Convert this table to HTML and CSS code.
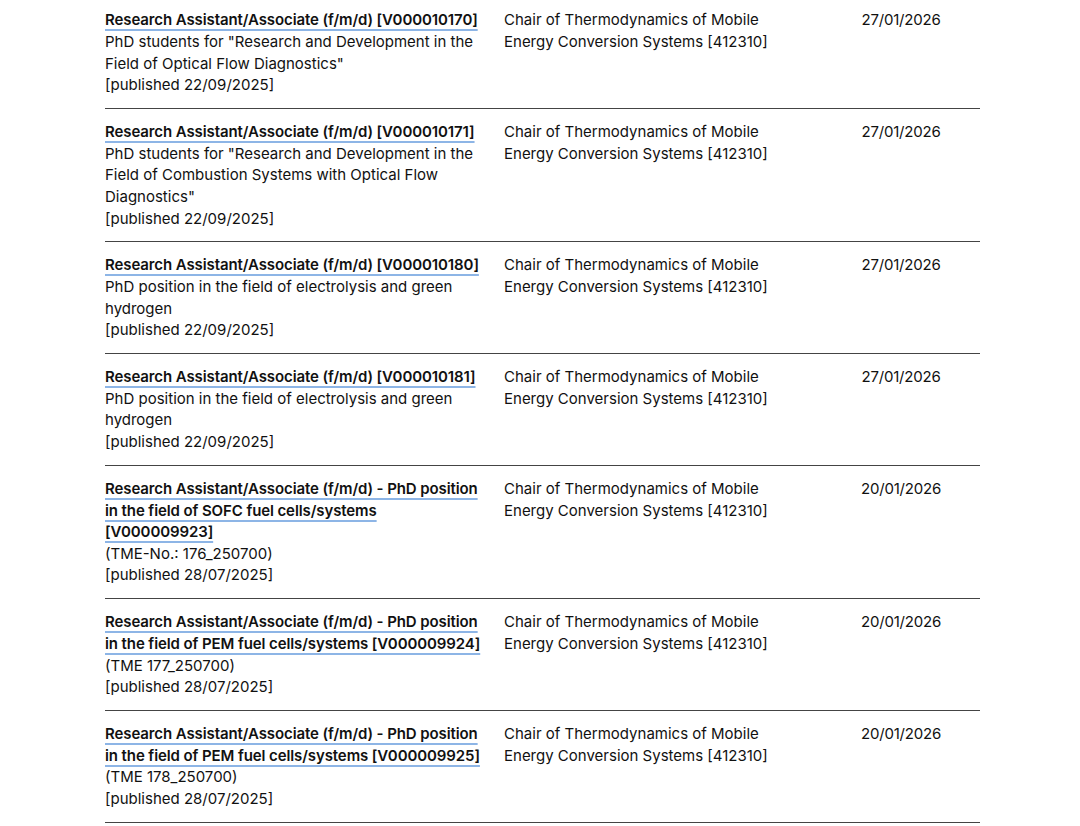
FILE: index.html
```html
<!DOCTYPE html>
<html lang="en">
<head>
<meta charset="utf-8">
<title>Job listings</title>
<link rel="stylesheet" href="styles.css">
</head>
<body>
<div class="jobs">
  <div class="row">
    <div class="cell title-cell">
      <a class="title" href="#">Research Assistant/Associate (f/m/d) [V000010170]</a><br>
      PhD students for "Research and Development in the Field of Optical Flow Diagnostics"<br>
      [published 22/09/2025]
    </div>
    <div class="cell org">Chair of Thermodynamics of Mobile Energy Conversion Systems [412310]</div>
    <div class="cell date">27/01/2026</div>
  </div>
  <div class="row">
    <div class="cell title-cell">
      <a class="title" href="#">Research Assistant/Associate (f/m/d) [V000010171]</a><br>
      PhD students for "Research and Development in the Field of Combustion Systems with Optical Flow Diagnostics"<br>
      [published 22/09/2025]
    </div>
    <div class="cell org">Chair of Thermodynamics of Mobile Energy Conversion Systems [412310]</div>
    <div class="cell date">27/01/2026</div>
  </div>
  <div class="row">
    <div class="cell title-cell">
      <a class="title" href="#">Research Assistant/Associate (f/m/d) [V000010180]</a><br>
      PhD position in the field of electrolysis and green hydrogen<br>
      [published 22/09/2025]
    </div>
    <div class="cell org">Chair of Thermodynamics of Mobile Energy Conversion Systems [412310]</div>
    <div class="cell date">27/01/2026</div>
  </div>
  <div class="row">
    <div class="cell title-cell">
      <a class="title" href="#">Research Assistant/Associate (f/m/d) [V000010181]</a><br>
      PhD position in the field of electrolysis and green hydrogen<br>
      [published 22/09/2025]
    </div>
    <div class="cell org">Chair of Thermodynamics of Mobile Energy Conversion Systems [412310]</div>
    <div class="cell date">27/01/2026</div>
  </div>
  <div class="row">
    <div class="cell title-cell">
      <a class="title" href="#">Research Assistant/Associate (f/m/d) - PhD position in the field of SOFC fuel cells/systems [V000009923]</a><br>
      (TME-No.: 176_250700)<br>
      [published 28/07/2025]
    </div>
    <div class="cell org">Chair of Thermodynamics of Mobile Energy Conversion Systems [412310]</div>
    <div class="cell date">20/01/2026</div>
  </div>
  <div class="row">
    <div class="cell title-cell">
      <a class="title" href="#">Research Assistant/Associate (f/m/d) - PhD position in the field of PEM fuel cells/systems [V000009924]</a><br>
      (TME 177_250700)<br>
      [published 28/07/2025]
    </div>
    <div class="cell org">Chair of Thermodynamics of Mobile Energy Conversion Systems [412310]</div>
    <div class="cell date">20/01/2026</div>
  </div>
  <div class="row">
    <div class="cell title-cell">
      <a class="title" href="#">Research Assistant/Associate (f/m/d) - PhD position in the field of PEM fuel cells/systems [V000009925]</a><br>
      (TME 178_250700)<br>
      [published 28/07/2025]
    </div>
    <div class="cell org">Chair of Thermodynamics of Mobile Energy Conversion Systems [412310]</div>
    <div class="cell date">20/01/2026</div>
  </div>
</div>
</body>
</html>
```
FILE: styles.css
```css
html, body {
  margin: 0;
  padding: 0;
  background: #ffffff;
}
body {
  font-family: Inter, "Liberation Sans", Arial, sans-serif;
  font-size: 15px;
  line-height: 21.6px;
  color: #111111;
}
.jobs {
  width: 875px;
  margin: -2.8px 0 0 105px;
}
.row {
  display: grid;
  grid-template-columns: 399px 318px 158px;
  padding: 12.2px 0;
  border-bottom: 1px solid #444444;
}
.title-cell {
  padding-right: 21px;
}
.org {
  padding-right: 14px;
}
.date {
  text-align: center;
  letter-spacing: -0.2px;
}
.title {
  color: #111111;
  font-weight: 600;
  letter-spacing: -0.1px;
  text-decoration: underline;
  text-decoration-color: #8db5e6;
  text-decoration-thickness: 2px;
  text-underline-offset: 4px;
}
```
